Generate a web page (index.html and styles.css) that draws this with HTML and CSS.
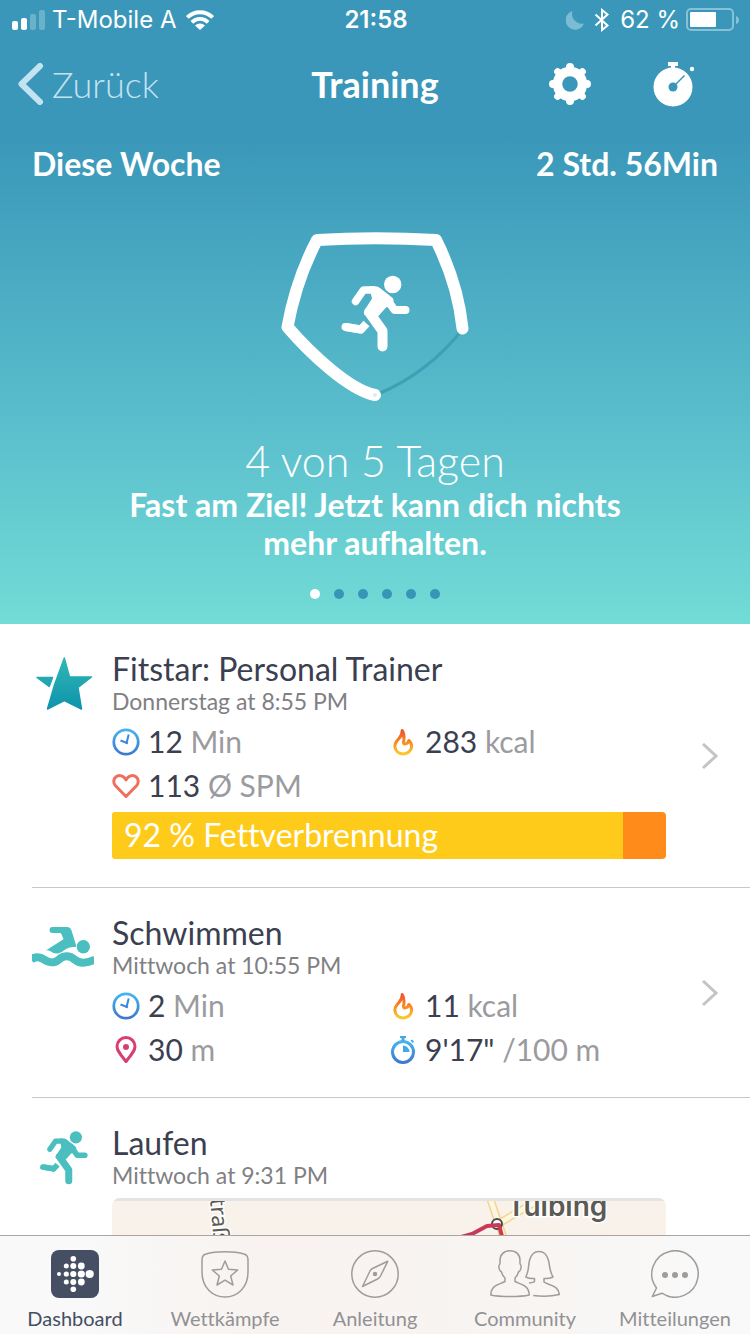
FILE: index.html
```html
<!DOCTYPE html>
<html lang="de">
<head>
<meta charset="utf-8">
<meta name="viewport" content="width=device-width, initial-scale=1">
<title>Training</title>
<link rel="stylesheet" href="styles.css">
</head>
<body>
<svg class="defs" aria-hidden="true">
  <defs>
    <linearGradient id="blue" x1="0" y1="0" x2="0" y2="1"><stop offset="0" stop-color="#45b4f0"/><stop offset="1" stop-color="#3f78cf"/></linearGradient>
    <linearGradient id="fire" x1="0" y1="0" x2="0" y2="1"><stop offset="0" stop-color="#f0522c"/><stop offset=".5" stop-color="#f98a24"/><stop offset="1" stop-color="#fcc82c"/></linearGradient>
    <linearGradient id="teal" gradientUnits="userSpaceOnUse" x1="0" y1="5" x2="0" y2="58"><stop offset="0" stop-color="#2fb9b4"/><stop offset="1" stop-color="#0f92ac"/></linearGradient>
    <symbol id="runner" viewBox="74 54 72 80">
      <circle cx="127.700" cy="64.500" r="8.700" fill="currentColor"/>
      <g fill="none" stroke="currentColor" stroke-linecap="round" stroke-linejoin="round">
        <path stroke-width="7.500" d="M90.500 81.500 98.500 70H108"/>
        <path stroke-width="8" d="M121 78l8.500 12h11"/>
        <path stroke-width="10" d="M104 92l13.500 19v15.500"/>
        <path stroke-width="8" stroke-linecap="butt" d="M81 107l15 2.500 5.500-6"/>
        <path stroke-width="8" d="M80.500 107l15 2.500"/>
      </g>
      <path fill="currentColor" d="M104 66.300h6q3 0 5 1.600l12 9.600q2.500 2 1 5l-1 3-6 2-8 9-14-2q-1-2 1-5l7-11z"/>
    </symbol>
    <symbol id="clock" viewBox="0 0 28 28">
      <circle cx="14" cy="14" r="12.200" fill="none" stroke="url(#blue)" stroke-width="2.800"/>
      <path fill="none" stroke="#3d87dc" stroke-width="2" d="M16.700 6.500 14.300 16M8.500 12.500l7.500 2.700"/>
    </symbol>
    <symbol id="flame" viewBox="0 0 28 28">
      <path fill="none" stroke="url(#fire)" stroke-width="3" stroke-linejoin="round" d="M13.200 2.500c.3 5-2.200 6.700-4.600 9.500-2.100 2.500-3 4.400-2.700 6.800.6 4.300 4 7.200 8.400 7.200s8-3.100 8.300-7.300c.2-2.500-.8-4.500-2.800-6.200-.4 1.800-1.700 3.200-4 3.600-1.900.1-1.300-2-.9-4.600.4-3.400-.2-6.600-1.700-9z"/>
    </symbol>
    <symbol id="heart" viewBox="0 0 28 28">
      <path fill="none" stroke="#ef6f5c" stroke-width="3" stroke-linejoin="round" d="M14 24.500 3.500 13.800C1 11 1.300 7 3.800 5 7 2.400 12 3.600 14 8c2-4.400 7-5.600 10.200-3 2.500 2 2.800 6 .3 8.800z"/>
    </symbol>
    <symbol id="pin" viewBox="0 0 28 28">
      <path fill="none" stroke="#d83f70" stroke-width="3" stroke-linejoin="round" d="M14 25.500C8 18 5 14.500 5 10.500a9 9 0 0 1 18 0c0 4-3 7.500-9 15z"/>
      <circle cx="14" cy="11" r="3" fill="#d83f70"/>
    </symbol>
    <symbol id="pace" viewBox="0 0 28 28">
      <circle cx="14" cy="16" r="10.500" fill="none" stroke="url(#blue)" stroke-width="3"/>
      <path fill="#45a6e8" d="M11 0h6v2h-1.500v3h-3V2H11zM14 9.500a6.500 6.500 0 0 1 6.500 6.500H14zM21.500 4.500 23 3.500l2 2-1.300 1.500z"/>
    </symbol>
  </defs>
</svg>

<div class="app">
  <main class="content">
    <header class="hero">
      <div class="status">
        <div class="status-side">
          <svg width="34" height="20" viewBox="0 0 34 20" fill="#fff"><rect y="11" width="6" height="9" rx="2"/><rect x="9" y="8" width="6" height="12" rx="2"/><g opacity=".25"><rect x="18" y="4" width="6" height="16" rx="2"/><rect x="27" width="6" height="20" rx="2"/></g></svg>
          <span class="carrier">T-Mobile A</span>
          <svg width="28" height="20" viewBox="0 0 28 20" fill="none" stroke="#fff" stroke-width="3.800"><path d="M1.300 7.500a18 18 0 0 1 25.400 0M5.900 12.300a11.500 11.500 0 0 1 16.200 0"/><path fill="#fff" stroke="none" d="M14 20 9 15.500a7.500 7.500 0 0 1 10 0z"/></svg>
        </div>
        <span class="time">21:58</span>
        <div class="status-side status-right">
          <svg width="18" height="20" viewBox="0 0 18 20"><path fill="#7cbcd3" d="M6.500 1A9.500 9.500 0 1 0 18 13.500 9.800 9.800 0 0 1 6.500 1z"/></svg>
          <svg class="bluetooth" width="16" height="24" viewBox="0 0 16 24" fill="none" stroke="#fff" stroke-width="2"><path d="M1.500 6.500 13.500 17.500 8 22V2l5.500 4.500L1.500 17.500"/></svg>
          <span>62 %</span>
          <svg width="54" height="24" viewBox="0 0 54 24"><rect x="1" y="1" width="46" height="21" rx="4" fill="none" stroke="#86c1d6" stroke-width="2"/><rect x="4" y="4" width="26" height="15" rx="1" fill="#fff"/><path fill="#86c1d6" d="M50 8q3 1 3 4t-3 4z"/></svg>
        </div>
      </div>

      <nav class="navbar">
        <a class="back" href="#"><svg width="26" height="42" viewBox="0 0 26 42"><path fill="none" stroke="currentColor" stroke-width="6" stroke-linecap="round" stroke-linejoin="round" d="M22 3 3.500 21 22 39"/></svg>Zurück</a>
        <h1 class="title">Training</h1>
        <div class="actions">
          <button type="button" aria-label="Einstellungen"><svg width="44" height="44" viewBox="-22 -22 44 44" stroke="#fff" fill="none"><circle r="12.500" stroke-width="9.500"/><path stroke-width="8" stroke-linecap="round" stroke-linejoin="round" d="M0-17V-15M0 17V15M-17 0H-15M17 0H15"/><path stroke-width="7" stroke-linecap="round" d="M-12.400-12.400-11-11M12.400 12.400 11 11M-12.400 12.400-11 11M12.400-12.400 11-11"/></svg></button>
          <button type="button" aria-label="Stoppuhr"><svg width="44" height="46" viewBox="0 0 44 46"><circle cx="21" cy="26" r="19.500" fill="#fff"/><path fill="#fff" d="M16 1h10v4h-3v4h-4V5h-3z"/><circle cx="40" cy="8" r="2.200" fill="#fff"/><circle cx="21" cy="26" r="4.500" fill="#3a96b8"/><path stroke="#3a96b8" stroke-width="1.500" d="M21 26 32.500 14.500"/></svg></button>
        </div>
      </nav>

      <div class="week"><span>Diese Woche</span><span>2 Std. 56Min</span></div>

      <div class="goal">
        <svg width="190" height="172" viewBox="15 11 190 172" fill="none" stroke-linecap="round" stroke-linejoin="round">
          <path stroke="#3f9fb4" stroke-width="3" d="M197 110Q163 153 113 174"/>
          <path stroke="#fff" stroke-width="12" d="M197.500 108.500Q193 64 171 20 110 16.500 52 20 31 60 22.500 107C45 133 84 170 110 175"/>
          <circle cx="110" cy="175" r="2" fill="#d9eef0"/>
          <use href="#runner" x="74" y="54" width="72" height="80" color="#fff"/>
        </svg>
        <h2 class="days">4 von 5 Tagen</h2>
        <p class="cheer">Fast am Ziel! Jetzt kann dich nichts mehr aufhalten.</p>
        <div class="dots"><i class="dot dot-on"></i><i class="dot"></i><i class="dot"></i><i class="dot"></i><i class="dot"></i><i class="dot"></i></div>
      </div>
    </header>

    <ul class="list">
      <li><a class="entry" href="#">
        <span class="entry-icon"><svg width="64" height="64" viewBox="0 0 64 64" fill="url(#teal)" stroke="url(#teal)" stroke-width="1.500" stroke-linejoin="round"><path d="M32.300 6 37.500 25H59.500L46 35.500 49.500 57 32.300 48.500 15.500 57 22.500 33zM5 25.500h15.500l-3.300 9z"/></svg></span>
        <div class="entry-body">
          <h3>Fitstar: Personal Trainer</h3>
          <p class="when">Donnerstag at 8:55 PM</p>
          <div class="stats">
            <span class="stat"><svg><use href="#clock"/></svg><span>12 <small>Min</small></span></span>
            <span class="stat"><svg><use href="#flame"/></svg><span>283 <small>kcal</small></span></span>
            <span class="stat"><svg><use href="#heart"/></svg><span>113 <small>Ø SPM</small></span></span>
          </div>
          <div class="zone"><span style="width:92.3%">92 % Fettverbrennung</span></div>
        </div>
        <svg class="chevron" width="18" height="28" viewBox="0 0 18 28"><path d="M3 1 16 13 3 25"/></svg>
      </a></li>
      <li><a class="entry" href="#">
        <span class="entry-icon"><svg width="62" height="64" viewBox="0 0 62 64" fill="#4bbfbf"><path d="M20.500 11H35q3.500 0 4.500 3.500l4.500 14.500q.5 2-1 2-5-.5-9 2-4 3.500-8 4.500-4 .5-8-2.500-2-1-4.300-.5L31.500 23.300l-2-5q-.5-1.300-2-1.300h-7a3 3 0 0 1 0-6z"/><circle cx="51.300" cy="30.700" r="6.700"/><path fill="none" stroke="#4bbfbf" stroke-width="8" d="M-1 43.500c4-3 9-3 13 0s10 4.500 15 0 11-4 15.500 0 12 4 20.500 0"/></svg></span>
        <div class="entry-body">
          <h3>Schwimmen</h3>
          <p class="when">Mittwoch at 10:55 PM</p>
          <div class="stats">
            <span class="stat"><svg><use href="#clock"/></svg><span>2 <small>Min</small></span></span>
            <span class="stat"><svg><use href="#flame"/></svg><span>11 <small>kcal</small></span></span>
            <span class="stat"><svg><use href="#pin"/></svg><span>30 <small>m</small></span></span>
            <span class="stat"><svg><use href="#pace"/></svg><span>9'17" <small>/100 m</small></span></span>
          </div>
        </div>
        <svg class="chevron" width="18" height="28" viewBox="0 0 18 28"><path d="M3 1 16 13 3 25"/></svg>
      </a></li>
      <li><a class="entry" href="#">
        <span class="entry-icon"><svg width="64" height="64" viewBox="0 0 64 64" color="#4bbfbf"><use href="#runner" x="6" y="4" width="51" height="56"/></svg></span>
        <div class="entry-body">
          <h3>Laufen</h3>
          <p class="when">Mittwoch at 9:31 PM</p>
          <svg class="map" viewBox="0 0 554 240" preserveAspectRatio="xMidYMin slice">
            <rect width="554" height="240" fill="#f9f2eb"/>
            <g fill="none" stroke="#f3d58d" stroke-width="8"><path d="M378 0 395 50M384 27 430 0"/><path stroke="#fdf6e2" stroke-width="5" d="M378 0 395 50M384 27 430 0"/></g>
            <circle cx="385" cy="26" r="5" fill="#fff" stroke="#4a4a4a" stroke-width="2"/>
            <path fill="none" stroke="#cb3857" stroke-width="4" stroke-linejoin="round" d="M338 42 360 36 375 28 387 27 391 42"/>
            <g fill="#5c5a55" stroke="#fff" stroke-width="3" paint-order="stroke">
              <text class="street" transform="translate(97 -11) rotate(85)">Straße</text>
              <text class="town" x="395" y="18">Tulbing</text>
            </g>
            <rect width="554" height="3" fill="#e3e3e2"/>
          </svg>
        </div>
      </a></li>
    </ul>
  </main>

  <nav class="tabs">
    <a class="tab tab-on" href="#"><svg width="48" height="48" viewBox="0 0 48 48"><rect width="48" height="48" rx="8" fill="#454e62"/><g fill="#fff"><circle cx="22.300" cy="8.700" r="2.800"/><circle cx="15.300" cy="16" r="2.500"/><circle cx="22.300" cy="16" r="3"/><circle cx="30.300" cy="16" r="3.400"/><circle cx="8" cy="24" r="2"/><circle cx="15.300" cy="24" r="2.600"/><circle cx="22.300" cy="24" r="3.100"/><circle cx="30.300" cy="24" r="3.600"/><circle cx="38.700" cy="24" r="4.100"/><circle cx="15.300" cy="32" r="2.500"/><circle cx="22.300" cy="32" r="3"/><circle cx="30.300" cy="32" r="3.400"/><circle cx="22.300" cy="39.300" r="2.800"/></g></svg>Dashboard</a>
    <a class="tab" href="#"><svg width="48" height="48" viewBox="0 0 48 48"><path d="M24 1.700C34 1.700 40 3 43 4q4 1 4 6v12C47 38 36 47 24 47S1 38 1 22V10q0-5 4-6C8 3 14 1.700 24 1.700z"/><path d="M24 11l3.500 8.200 9.200.8-7 6 2.300 9-8-4.800-8 4.800 2.300-9-7-6 9.200-.8z"/></svg>Wettkämpfe</a>
    <a class="tab" href="#"><svg width="48" height="48" viewBox="0 0 48 48"><circle cx="24" cy="24" r="23.200"/><path d="M36.700 11.300 29.500 26q-1 2-3 3L11.500 36.500 18.500 22q1-2.500 3-3.500z"/><circle cx="24" cy="24" r="1.500" fill="currentColor"/></svg>Anleitung</a>
    <a class="tab" href="#"><svg width="70" height="48" viewBox="0 0 70 48"><path d="M20 .8C14 .8 10 4.500 10 10.500V14q-1.500 1-1 4t2.500 4q1 4 3.500 6v3.500C10 34.500 1 34.500.8 45 5 46 12 46.500 20 46.500S35 46 39.200 45C39 34.500 30 34.500 25 31.500V28q2.500-2 3.500-6 2-1 2.500-4t-1-4v-3.500C30 4.500 26 .8 20 .8z"/><path d="M39 33q5-.5 5.500-1.500v-3q-5 .5-8.700-1.500C39 21 38 17 39.500 10.500 41 4.500 44 1.500 49 1.500s8 3 9.500 9C60 17 59.500 21 63 27q-4 2-9 1.500v3.500c5 3.500 14.500 3 15.300 12.500-8 2-19 2-26 1"/></svg>Community</a>
    <a class="tab" href="#"><svg width="48" height="48" viewBox="0 0 48 48"><path d="M5.500 38A23.200 23.200 0 1 1 11 43.200L1.300 46.500z"/><g fill="currentColor" stroke="none"><circle cx="14" cy="25" r="3"/><circle cx="24" cy="25" r="3"/><circle cx="34" cy="25" r="3"/></g></svg>Mitteilungen</a>
  </nav>
</div>
</body>
</html>
```
FILE: styles.css
```css
* { box-sizing: border-box; }
body, h1, h2, h3, p, ul { margin: 0; padding: 0; font-weight: 400; }
body { font-family: Lato, "Open Sans", sans-serif; font-variant-ligatures: none; color: #3b4050; background: #fff; }
a { color: inherit; text-decoration: none; }
svg { display: block; flex: none; }
.defs { position: absolute; width: 0; height: 0; }

.app { display: flex; flex-direction: column; height: 100vh; }
.content { flex: 1; min-height: 0; overflow-y: auto; scrollbar-width: none; }

.hero { color: #fff; background: linear-gradient(#3a97b9 0, #3a97b9 22%, #5cc0cd 70%, #72dcd6 100%); }
.status { display: grid; grid-template-columns: 1fr auto 1fr; align-items: center; height: 40px; padding: 0 10px 0 12px; font: 400 24px/28px Inter, sans-serif; }
.status-side { display: flex; align-items: center; gap: 6px; }
.status-right { justify-content: flex-end; }
.carrier { margin-right: 4px; }
.bluetooth { margin: 0 4px; }
.time { font-weight: 600; }

.navbar { display: grid; grid-template-columns: 1fr auto 1fr; align-items: center; height: 88px; padding: 0 54px 0 18px; }
.back { display: flex; align-items: center; gap: 8px; font-size: 36px; font-weight: 300; color: #c3e3f1; }
.title { font-size: 36px; font-weight: 700; padding-left: 36px; }
.actions { display: flex; justify-content: flex-end; gap: 60px; }
.actions button { padding: 0; border: 0; background: none; }

.week { display: flex; justify-content: space-between; padding: 17px 32px 19px; font-size: 32px; line-height: 38px; font-weight: 700; }
.goal { display: flex; flex-direction: column; align-items: center; padding: 29px 100px 25px; text-align: center; }
.days { margin-top: 33px; font-size: 43px; line-height: 50px; font-weight: 300; }
.cheer { font-size: 32px; line-height: 38px; font-weight: 700; }
.dots { display: flex; gap: 14px; margin-top: 27px; }
.dot { width: 10px; height: 10px; border-radius: 50%; background: #3796b8; }
.dot-on { background: #fff; }

.list { list-style: none; padding-left: 32px; }
.list li { border-bottom: 1px solid #c8c8ca; }
.entry { display: grid; grid-template-columns: 80px 1fr 52px; align-items: start; padding: 27px 32px 25px 0; }
.entry-icon { padding-top: 1px; }
.entry-body { min-width: 0; }
.entry h3 { font-size: 32px; line-height: 36px; }
.when { font-size: 23px; line-height: 28px; color: #808083; }
.stats { display: grid; grid-template-columns: 1fr 1fr; margin-top: 5px; font-size: 30px; line-height: 42px; }
.stat { display: flex; align-items: center; gap: 8px; height: 44px; white-space: nowrap; }
.stat > span { padding-bottom: 2px; }
.stat svg { width: 28px; height: 28px; }
.stat small { font-size: 30px; color: #9b9b9f; }
.zone { margin: 4px 0 3px; border-radius: 4px; overflow: hidden; background: #ff8c1a; }
.zone span { display: block; padding: 0 0 2px 12px; font-size: 32px; line-height: 45px; color: #fff; background: #ffcb1a; }
.chevron { align-self: center; justify-self: end; fill: none; stroke: #c4c4c7; stroke-width: 3; }
.map { width: 100%; height: 240px; margin-top: 9px; border-radius: 8px; }
.street { font: 400 22px "Noto Sans", sans-serif; }
.town { font: 600 28px Inter, sans-serif; }

.tabs { display: grid; grid-template-columns: repeat(5, 1fr); height: 99px; padding-top: 14px; border-top: 1px solid #a9a5a4; background: linear-gradient(90deg, #f9f9f9 10%, #f8f3f0 35%, #f8f4f1 65%, #f9f9f9 95%); }
.tab { display: flex; flex-direction: column; align-items: center; gap: 7px; font-size: 20px; line-height: 26px; color: #919194; }
.tab svg { fill: none; stroke: #a09c9b; stroke-width: 1.5; stroke-linejoin: round; color: #a09c9b; }
.tab rect, .tab-on circle { stroke: none; }
.tab-on { color: #454e62; }
```
